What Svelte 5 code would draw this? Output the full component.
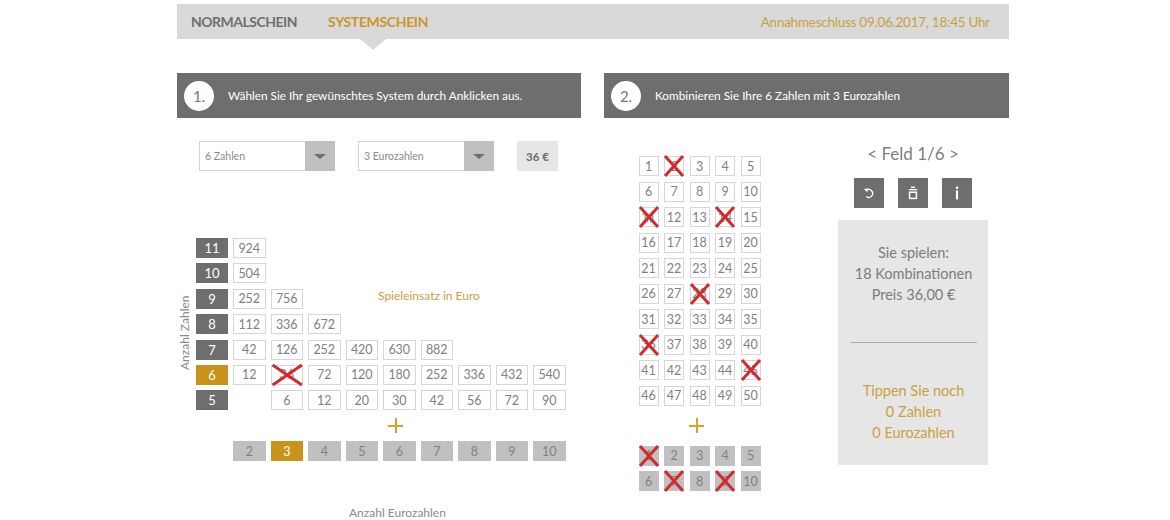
<script lang="ts">
  const COSTS: { n: number; vals: (number | null)[] }[] = [
    { n: 11, vals: [924] },
    { n: 10, vals: [504] },
    { n: 9, vals: [252, 756] },
    { n: 8, vals: [112, 336, 672] },
    { n: 7, vals: [42, 126, 252, 420, 630, 882] },
    { n: 6, vals: [12, 36, 72, 120, 180, 252, 336, 432, 540] },
    { n: 5, vals: [null, 6, 12, 20, 30, 42, 56, 72, 90] },
  ];
  const EURO = [2, 3, 4, 5, 6, 7, 8, 9, 10];

  const picked = [2, 11, 14, 28, 36, 45];
  const pickedEuro = [1, 7, 9];
  const nums = Array.from({ length: 50 }, (_, i) => i + 1);
  const euros = Array.from({ length: 10 }, (_, i) => i + 1);
</script>

{#snippet cross()}
  <svg class="cross" viewBox="0 0 20 20" preserveAspectRatio="none" aria-hidden="true">
    <path d="M1 0 19 20M19 0 1 20" />
  </svg>
{/snippet}

<div class="page">
  <header class="top">
    <nav class="tabs">
      <span class="tab">NORMALSCHEIN</span>
      <span class="tab active">SYSTEMSCHEIN</span>
    </nav>
    <span class="deadline">Annahmeschluss 09.06.2017, 18:45 Uhr</span>
  </header>

  <div class="columns">
    <section class="left">
      <div class="step">
        <span class="badge">1.</span>
        <span>Wählen Sie Ihr gewünschtes System durch Anklicken aus.</span>
      </div>

      <div class="selects">
        <div class="select"><span class="sel-label">6 Zahlen</span><span class="sel-btn"></span></div>
        <div class="select"><span class="sel-label">3 Eurozahlen</span><span class="sel-btn"></span></div>
        <div class="price">36 €</div>
      </div>

      <div class="matrix-wrap">
        <span class="axis-y">Anzahl Zahlen</span>
        <div class="matrix">
          {#each COSTS as row}
            <div class="rowhead" class:on={row.n === 6}>{row.n}</div>
            {#each row.vals as v, i}
              {#if v === null}
                <span></span>
              {:else}
                <div class="cell">
                  {v}
                  {#if row.n === 6 && i === 1}{@render cross()}{/if}
                </div>
              {/if}
            {/each}
            {#if row.n === 9}
              <div class="stake">Spieleinsatz in Euro</div>
            {:else if row.vals.length < 9}
              <span class="rest" style={`grid-column: ${row.vals.length + 2} / -1`}></span>
            {/if}
          {/each}
          <div class="plus-row"><span class="plus"></span></div>
          <span></span>
          {#each EURO as e}
            <div class="cell euro" class:on={e === 3}>{e}</div>
          {/each}
        </div>
        <div class="axis-x">Anzahl Eurozahlen</div>
      </div>
    </section>

    <section class="right">
      <div class="step">
        <span class="badge">2.</span>
        <span>Kombinieren Sie Ihre 6 Zahlen mit 3 Eurozahlen</span>
      </div>

      <div class="play">
        <div class="picker">
          <div class="numgrid">
            {#each nums as n}
              <div class="num">
                {n}
                {#if picked.includes(n)}{@render cross()}{/if}
              </div>
            {/each}
          </div>
          <div class="plus-small"><span class="plus"></span></div>
          <div class="numgrid">
            {#each euros as n}
              <div class="num euro">
                {n}
                {#if pickedEuro.includes(n)}{@render cross()}{/if}
              </div>
            {/each}
          </div>
        </div>

        <aside class="side">
          <div class="feld">&lt; Feld 1/6 &gt;</div>
          <div class="tools">
            <button class="tool" type="button" aria-label="Zurücksetzen">
              <svg viewBox="0 0 14 14" width="14" height="14">
                <path d="M4.2 4.2A4 4 0 1 1 4.2 10.6" fill="none" stroke="#fff" stroke-width="1.3" />
                <path d="M2 3 5.8 2.6 5.4 6.6Z" fill="#fff" />
              </svg>
            </button>
            <button class="tool" type="button" aria-label="Löschen">
              <svg viewBox="0 0 14 14" width="14" height="14">
                <path d="M5 1.2h4M2.8 3.6h8.4" stroke="#fff" stroke-width="1.4" fill="none" />
                <rect x="3.6" y="6.2" width="6.8" height="6.2" fill="none" stroke="#fff" stroke-width="1.5" />
              </svg>
            </button>
            <button class="tool" type="button" aria-label="Info">
              <svg viewBox="0 0 14 14" width="14" height="14">
                <rect x="5.9" y="0.6" width="2.2" height="2.4" fill="#fff" />
                <rect x="5.9" y="4.4" width="2.2" height="9" fill="#fff" />
              </svg>
            </button>
          </div>
          <div class="summary">
            <p class="plays">Sie spielen:<br />18 Kombinationen<br />Preis 36,00 €</p>
            <hr />
            <p class="todo">Tippen Sie noch<br />0 Zahlen<br />0 Eurozahlen</p>
          </div>
        </aside>
      </div>
    </section>
  </div>
</div>

<style>
  :global(body) {
    margin: 0;
    background: #fff;
    font-family: Lato, "Open Sans", sans-serif;
    color: #777;
  }
  .page {
    width: 832px;
    margin-left: 177px;
    padding-top: 4px;
    height: 516px;
    overflow: hidden;
  }
  .top {
    position: relative;
    height: 35px;
    background: #d9d9d9;
    display: flex;
    align-items: center;
    justify-content: space-between;
    padding: 0 19px 0 14px;
    margin-bottom: 34px;
  }
  .top::after {
    content: "";
    position: absolute;
    left: 183px;
    top: 35px;
    border-style: solid;
    border-width: 11px 13px 0;
    border-color: #d9d9d9 transparent transparent;
  }
  .tabs {
    display: flex;
    gap: 31px;
  }
  .tab {
    font-size: 14px;
    letter-spacing: -0.5px;
    font-weight: 700;
    color: #6f6f6f;
  }
  .tab.active {
    letter-spacing: -0.35px;
    color: #c9972b;
  }
  .deadline {
    font-size: 13.5px;
    letter-spacing: -0.25px;
    color: #c9a040;
  }

  .columns {
    display: flex;
    gap: 23px;
  }
  .left {
    width: 404px;
  }
  .right {
    width: 405px;
  }
  .step {
    height: 45px;
    background: #6e6e6e;
    color: #fff;
    display: flex;
    align-items: center;
    gap: 14px;
    padding-left: 7px;
    font-size: 11.8px;
  }
  .badge {
    width: 30px;
    height: 30px;
    border-radius: 50%;
    background: #fff;
    color: #777;
    font-size: 15px;
    display: flex;
    align-items: center;
    justify-content: center;
    flex: none;
  }

  .selects {
    display: flex;
    gap: 23px;
    margin: 23px 0 0 22px;
  }
  .select {
    width: 136px;
    height: 30px;
    box-sizing: border-box;
    border: 1px solid #d4d4d4;
    display: flex;
    font-size: 10.5px;
    color: #8a8a8a;
  }
  .sel-label {
    flex: 1;
    padding-left: 5px;
    line-height: 28px;
  }
  .sel-btn {
    width: 30px;
    margin: -1px -1px -1px 0;
    background: #c0c0c0;
    display: flex;
    align-items: center;
    justify-content: center;
  }
  .sel-btn::after {
    content: "";
    border-style: solid;
    border-width: 5px 6px 0;
    border-color: #6e6e6e transparent transparent;
  }
  .price {
    width: 41px;
    height: 30px;
    background: #e6e6e6;
    color: #6e6e6e;
    font-size: 11.5px;
    font-weight: 700;
    display: flex;
    align-items: center;
    justify-content: center;
  }

  .matrix-wrap {
    position: relative;
    margin: 67px 0 0 19px;
  }
  .axis-y {
    position: absolute;
    left: -19px;
    top: 58px;
    height: 74px;
    writing-mode: vertical-rl;
    transform: rotate(180deg);
    font-size: 12px;
    color: #8a8a8a;
    text-align: center;
    white-space: nowrap;
  }
  .matrix {
    display: grid;
    grid-template-columns: 32px repeat(9, 32.5px);
    grid-auto-rows: 20px;
    column-gap: 5px;
    row-gap: 5.4px;
  }
  .rowhead {
    background: #6e6e6e;
    color: #fff;
    font-size: 13px;
    display: flex;
    align-items: center;
    justify-content: center;
  }
  .rowhead.on {
    background: #c9931b;
  }
  .cell {
    position: relative;
    box-sizing: border-box;
    border: 1px solid #d6d6d6;
    font-size: 12.5px;
    color: #808080;
    display: flex;
    align-items: center;
    justify-content: center;
  }
  .cell.euro {
    background: #c0c0c0;
    border: 0;
  }
  .cell.euro.on {
    background: #c9931b;
    color: #fff;
  }
  .stake {
    grid-column: 4 / -1;
    padding-left: 70px;
    font-size: 12px;
    line-height: 13px;
    color: #c9a040;
  }
  .rest {
    display: block;
  }
  .plus-row {
    grid-column: 1 / -1;
    display: flex;
    justify-content: center;
    align-items: center;
    padding-left: 30px;
  }
  .plus {
    display: block;
    width: 15px;
    height: 15px;
    background:
      linear-gradient(#d5a02e, #d5a02e) center / 100% 2px no-repeat,
      linear-gradient(#d5a02e, #d5a02e) center / 2px 100% no-repeat;
  }
  .axis-x {
    margin: 44px 0 0 153px;
    font-size: 12px;
    color: #8a8a8a;
  }

  .play {
    display: flex;
    margin-top: 38px;
  }
  .picker {
    margin-left: 34.5px;
    width: 199.5px;
  }
  .numgrid {
    display: grid;
    grid-template-columns: repeat(5, 20px);
    grid-auto-rows: 20px;
    gap: 5.5px;
  }
  .num {
    position: relative;
    box-sizing: border-box;
    border: 1px solid #d6d6d6;
    font-size: 12.5px;
    color: #808080;
    display: flex;
    align-items: center;
    justify-content: center;
  }
  .num.euro {
    background: #c0c0c0;
    border: 0;
  }
  .plus-small {
    width: 116px;
    height: 40px;
    display: flex;
    align-items: center;
    justify-content: center;
  }
  .cross {
    position: absolute;
    left: -1px;
    top: -1px;
    width: calc(100% + 2px);
    height: calc(100% + 2px);
    overflow: visible;
  }
  .num.euro .cross {
    left: 0;
    top: 0;
    width: 100%;
    height: 100%;
  }
  .cross path {
    fill: none;
    stroke: #d32a2e;
    stroke-width: 3;
    vector-effect: non-scaling-stroke;
  }

  .side {
    width: 150px;
    margin-top: -18px;
  }
  .feld {
    text-align: center;
    font-size: 17px;
    line-height: 20px;
    color: #808080;
    margin: 6px 0 14px 0;
  }
  .tools {
    display: flex;
    justify-content: center;
    gap: 14px;
  }
  .tool {
    width: 30px;
    height: 30px;
    padding: 0;
    border: 0;
    background: #6e6e6e;
    display: flex;
    align-items: center;
    justify-content: center;
  }
  .summary {
    margin-top: 12px;
    height: 245px;
    background: #e6e6e6;
    box-sizing: border-box;
    padding: 22px 11px 0 12px;
    text-align: center;
    font-size: 14.5px;
    line-height: 21px;
  }
  .summary p {
    margin: 0;
  }
  .plays {
    color: #7d7d7d;
  }
  .summary hr {
    margin: 37px 0 37px;
    border: 0;
    border-top: 1px solid #aaa;
  }
  .todo {
    color: #c9a040;
  }
</style>
